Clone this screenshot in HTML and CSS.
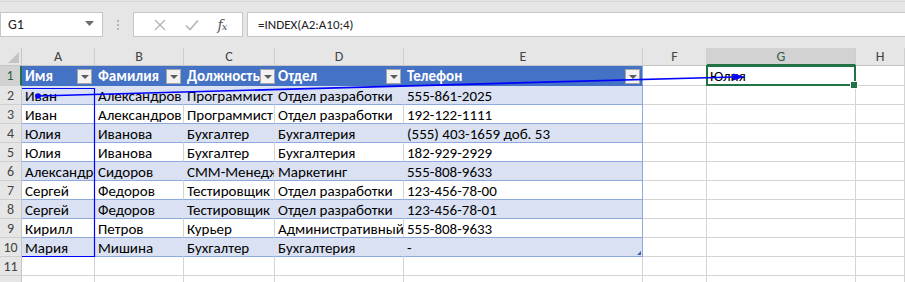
FILE: index.html
```html
<!DOCTYPE html>
<html lang="ru">
<head>
  <meta charset="UTF-8">
  <title>INDEX</title>
  <link rel="stylesheet" href="styles.css">
</head>
<body>
  <div class="formula-bar">
    <div class="name-box">
      <span>G1</span>
      <svg class="caret" width="9" height="5" viewBox="0 0 9 5"><path d="M0 0h9L4.5 5z"/></svg>
    </div>
    <div class="grip"><i></i><i></i><i></i></div>
    <div class="fx-buttons">
      <svg width="12" height="12" viewBox="0 0 12 12"><path d="M1 1l10 10M11 1L1 11" stroke="#b5b5b5" stroke-width="1.4" fill="none"/></svg>
      <svg width="14" height="12" viewBox="0 0 14 12"><path d="M1 6.5l4 4L13 1.5" stroke="#b5b5b5" stroke-width="1.6" fill="none"/></svg>
      <span class="fx">f<sub>x</sub></span>
    </div>
    <div class="formula-input">=INDEX(A2:A10;4)</div>
  </div>

  <div class="sheet">
    <div class="corner"></div>
    <div class="col-head">A</div>
    <div class="col-head">B</div>
    <div class="col-head">C</div>
    <div class="col-head">D</div>
    <div class="col-head">E</div>
    <div class="col-head">F</div>
    <div class="col-head selected">G</div>
    <div class="col-head">H</div>

    <div class="row-head selected">1</div>
    <div class="c th"><span>Имя</span><b class="filter"></b></div>
    <div class="c th"><span>Фамилия</span><b class="filter"></b></div>
    <div class="c th"><span>Должность</span><b class="filter"></b></div>
    <div class="c th"><span>Отдел</span><b class="filter"></b></div>
    <div class="c th last"><span>Телефон</span><b class="filter"></b></div>
    <div class="c"></div>
    <div class="c active">Юлия</div>
    <div class="c"></div>

    <div class="row-head">2</div>
    <div class="c td band">Иван</div>
    <div class="c td band">Александров</div>
    <div class="c td band">Программист</div>
    <div class="c td band">Отдел разработки</div>
    <div class="c td band last">555-861-2025</div>
    <div class="c"></div><div class="c"></div><div class="c"></div>

    <div class="row-head">3</div>
    <div class="c td">Иван</div>
    <div class="c td">Александров</div>
    <div class="c td">Программист</div>
    <div class="c td">Отдел разработки</div>
    <div class="c td last">192-122-1111</div>
    <div class="c"></div><div class="c"></div><div class="c"></div>

    <div class="row-head">4</div>
    <div class="c td band">Юлия</div>
    <div class="c td band">Иванова</div>
    <div class="c td band">Бухгалтер</div>
    <div class="c td band">Бухгалтерия</div>
    <div class="c td band last">(555) 403-1659 доб. 53</div>
    <div class="c"></div><div class="c"></div><div class="c"></div>

    <div class="row-head">5</div>
    <div class="c td">Юлия</div>
    <div class="c td">Иванова</div>
    <div class="c td">Бухгалтер</div>
    <div class="c td">Бухгалтерия</div>
    <div class="c td last">182-929-2929</div>
    <div class="c"></div><div class="c"></div><div class="c"></div>

    <div class="row-head">6</div>
    <div class="c td band">Александр</div>
    <div class="c td band">Сидоров</div>
    <div class="c td band">СММ-Менеджер</div>
    <div class="c td band">Маркетинг</div>
    <div class="c td band last">555-808-9633</div>
    <div class="c"></div><div class="c"></div><div class="c"></div>

    <div class="row-head">7</div>
    <div class="c td">Сергей</div>
    <div class="c td">Федоров</div>
    <div class="c td">Тестировщик</div>
    <div class="c td">Отдел разработки</div>
    <div class="c td last">123-456-78-00</div>
    <div class="c"></div><div class="c"></div><div class="c"></div>

    <div class="row-head">8</div>
    <div class="c td band">Сергей</div>
    <div class="c td band">Федоров</div>
    <div class="c td band">Тестировщик</div>
    <div class="c td band">Отдел разработки</div>
    <div class="c td band last">123-456-78-01</div>
    <div class="c"></div><div class="c"></div><div class="c"></div>

    <div class="row-head">9</div>
    <div class="c td">Кирилл</div>
    <div class="c td">Петров</div>
    <div class="c td">Курьер</div>
    <div class="c td">Административный</div>
    <div class="c td last">555-808-9633</div>
    <div class="c"></div><div class="c"></div><div class="c"></div>

    <div class="row-head">10</div>
    <div class="c td band">Мария</div>
    <div class="c td band">Мишина</div>
    <div class="c td band">Бухгалтер</div>
    <div class="c td band">Бухгалтерия</div>
    <div class="c td band last resize">-</div>
    <div class="c"></div><div class="c"></div><div class="c"></div>

    <div class="row-head">11</div>
    <div class="c"></div><div class="c"></div><div class="c"></div><div class="c"></div>
    <div class="c"></div><div class="c"></div><div class="c"></div><div class="c"></div>

    <div class="row-head"></div>
    <div class="c"></div><div class="c"></div><div class="c"></div><div class="c"></div>
    <div class="c"></div><div class="c"></div><div class="c"></div><div class="c"></div>
  </div>

  <!-- trace precedents: box around A2:A10 and arrow to G1 -->
  <svg class="trace" width="905" height="282" viewBox="0 0 905 282">
    <path d="M22 88.5H94.5V256.5H22" fill="none" stroke="#0000ff" stroke-width="1.2"/>
    <circle cx="38" cy="96" r="2.8" fill="#0000ff"/>
    <line x1="38" y1="96" x2="734" y2="77" stroke="#0000ff" stroke-width="1.6"/>
    <path d="M745 76.7L733 73.5 733.3 80.5z" fill="#0000ff"/>
  </svg>
</body>
</html>
```

FILE: styles.css
```css
:root {
  --chrome: #e6e6e6;
  --grid: #d4d4d4;
  --head-text: #444444;
  --table-head: #4472c4;
  --band: #d9e1f2;
  --table-line: #8ea9db;
  --excel-green: #217346;
}

* {
  margin: 0;
  padding: 0;
  box-sizing: border-box;
}

body {
  width: 905px;
  height: 282px;
  overflow: hidden;
  position: relative;
  background: var(--chrome);
  font-family: Carlito, "Liberation Sans", sans-serif;
  border-top: 1px solid #d6d6d6;
  margin-top: 1px;
}

/* ---------- formula bar ---------- */

.formula-bar {
  display: flex;
  align-items: center;
  height: 25px;
  margin-top: 10px;
}

.name-box {
  width: 103px;
  height: 25px;
  background: #fff;
  border: 1px solid #c6c6c6;
  display: flex;
  align-items: center;
  justify-content: space-between;
  padding: 0 8px 0 7px;
  font-size: 14px;
  color: #222;
}

.caret {
  fill: #6d6d6d;
  margin-top: -3px;
}

.grip {
  width: 30px;
  display: flex;
  flex-direction: column;
  align-items: center;
  gap: 2px;
}

.grip i {
  width: 2px;
  height: 2px;
  background: #b4b4b4;
}

.fx-buttons {
  width: 110px;
  height: 25px;
  background: #fff;
  border: 1px solid #c6c6c6;
  display: flex;
  align-items: center;
  justify-content: space-around;
  padding: 0 6px 0 10px;
}

.fx {
  font-family: "DejaVu Serif", serif;
  font-style: italic;
  font-size: 14px;
  color: #555;
  letter-spacing: -1px;
}

.fx sub {
  font-size: 10px;
  vertical-align: 0;
}

.formula-input {
  flex: 1;
  margin-left: 4px;
  height: 25px;
  background: #fff;
  border: 1px solid #c6c6c6;
  border-right: none;
  padding-left: 10px;
  font-size: 13px;
  line-height: 23px;
  color: #222;
}

/* ---------- sheet ---------- */

.sheet {
  margin-top: 11px;
  display: grid;
  grid-template-columns: 22px 73px 89px 91px 129px 239px 64px 149px 49px;
  grid-template-rows: 18px 20px repeat(11, 19px);
  background: #fff;
}

.corner {
  background: var(--chrome);
  border-right: 1px solid #c6c6c6;
  border-bottom: 1px solid #c6c6c6;
  position: relative;
}

.corner::after {
  content: "";
  position: absolute;
  right: 2px;
  bottom: 2px;
  border-left: 11px solid transparent;
  border-bottom: 11px solid #c4c4c4;
}

.col-head {
  background: var(--chrome);
  border-right: 1px solid #cfcfcf;
  border-bottom: 1px solid #c6c6c6;
  text-align: center;
  font-size: 14px;
  line-height: 18px;
  color: var(--head-text);
}

.col-head.selected {
  background: #d2d2d2;
  color: #2f5f46;
  border-bottom: 2px solid var(--excel-green);
}

.row-head {
  background: var(--chrome);
  border-right: 1px solid #c6c6c6;
  border-bottom: 1px solid #cfcfcf;
  text-align: center;
  font-size: 14px;
  line-height: 19px;
  color: var(--head-text);
}

.row-head.selected {
  background: #d2d2d2;
  color: #2f5f46;
  border-right: 2px solid var(--excel-green);
}

.c {
  border-right: 1px solid var(--grid);
  border-bottom: 1px solid var(--grid);
  padding: 1px 3px 0;
  font-size: 15px;
  line-height: 18px;
  color: #000;
  white-space: nowrap;
  overflow: hidden;
  text-overflow: clip;
}

.c.th {
  background: var(--table-head);
  border-right-color: var(--table-head);
  border-bottom-color: var(--table-head);
  color: #fff;
  font-weight: bold;
  display: flex;
  align-items: center;
  justify-content: space-between;
  padding: 1px 2px 0 3px;
  overflow: visible;
}

.filter {
  width: 15px;
  height: 15px;
  flex: none;
  background: #f2f2f2;
  border: 1px solid #a6a6a6;
  position: relative;
}

.filter::after {
  content: "";
  position: absolute;
  left: 3px;
  top: 5px;
  border-left: 4px solid transparent;
  border-right: 4px solid transparent;
  border-top: 4px solid #5c5c5c;
}

.c.td {
  border-bottom-color: var(--table-line);
}

.c.band {
  background: var(--band);
  border-right-color: var(--band);
}

.c.last,
.c.band.last,
.c.th.last {
  border-right-color: var(--table-line);
}

.c.resize {
  position: relative;
}

.c.resize::after {
  content: "";
  position: absolute;
  right: 1px;
  bottom: 1px;
  border-left: 4px solid transparent;
  border-bottom: 4px solid #3a5ea8;
}

.c.active {
  position: relative;
  overflow: visible;
}

.c.active::before {
  content: "";
  position: absolute;
  left: -1px;
  top: -1px;
  right: -1px;
  bottom: -1px;
  border: 2px solid var(--excel-green);
}

.c.active::after {
  content: "";
  position: absolute;
  right: -3px;
  bottom: -4px;
  width: 6px;
  height: 6px;
  background: var(--excel-green);
  border: 1px solid #fff;
}

.trace {
  position: absolute;
  left: 0;
  top: -2px;
  pointer-events: none;
}
```
